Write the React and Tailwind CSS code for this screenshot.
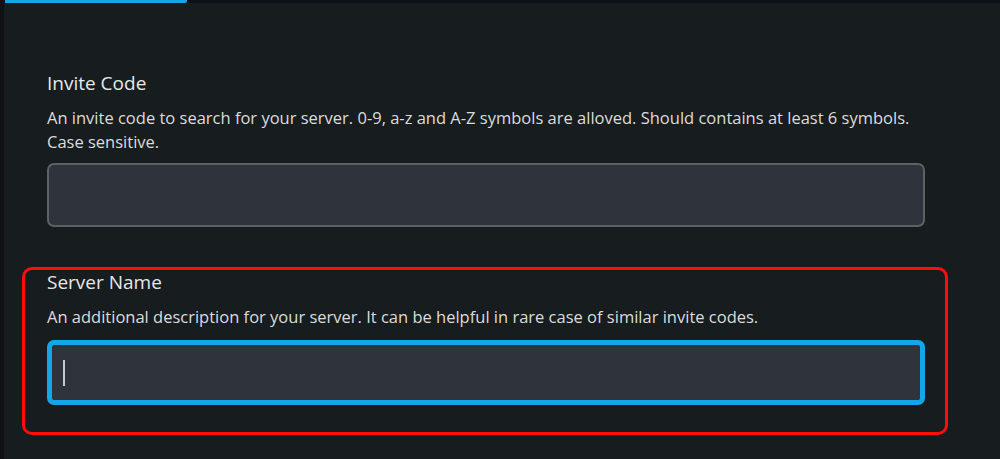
import React from 'react';

const Field = ({ title, description, focused = false, highlighted = false }) => (
  <div className="relative">
    {/* annotation frame drawn over the field */}
    {highlighted && (
      <div className="pointer-events-none absolute -left-[25px] -right-[23px] -top-[1px] -bottom-[30px] rounded-[10px] border-[3px] border-[#ff0d0d]" />
    )}
    <h3 className="text-[19px] leading-[28px] font-medium text-[#e8e8e8]">{title}</h3>
    <p className="mt-[9px] text-[16.5px] leading-[24px] text-[#dcdcdc]">{description}</p>
    <div
      className={
        focused
          ? 'mt-[11px] h-[65px] rounded-[7px] border-[5px] border-[#12a7e8] bg-[#2f333b] flex items-center pl-[11px]'
          : 'mt-[9px] h-[64px] rounded-[7px] border-2 border-[#5d6167] bg-[#2f333b]'
      }
    >
      {focused && <span className="block w-[2px] h-[26px] bg-[#c8c8c8]" />}
    </div>
  </div>
);

export default function App() {
  return (
    <div className="h-[459px] w-full overflow-hidden bg-[#171c1f] flex font-['Open_Sans','Noto_Sans',sans-serif]">
      <div className="w-[4px] shrink-0 bg-[#0e1216]" />
      <div className="flex-1 flex flex-col">
        <div className="h-[3px] bg-[#0b1019] flex">
          <div className="ml-[1px] w-[182px] bg-[#12a7e8] rounded-br-[2px]" />
        </div>
        <div className="pl-[43px] pr-[75px] pt-[66px] flex flex-col gap-[41px]">
          <Field
            title="Invite Code"
            description={
              <>
                An invite code to search for your server. 0-9, a-z and A-Z symbols are alloved. Should contains at least 6 symbols.
                <br />
                Case sensitive.
              </>
            }
          />
          <Field
            title="Server Name"
            description="An additional description for your server. It can be helpful in rare case of similar invite codes."
            focused
            highlighted
          />
        </div>
      </div>
    </div>
  );
}
